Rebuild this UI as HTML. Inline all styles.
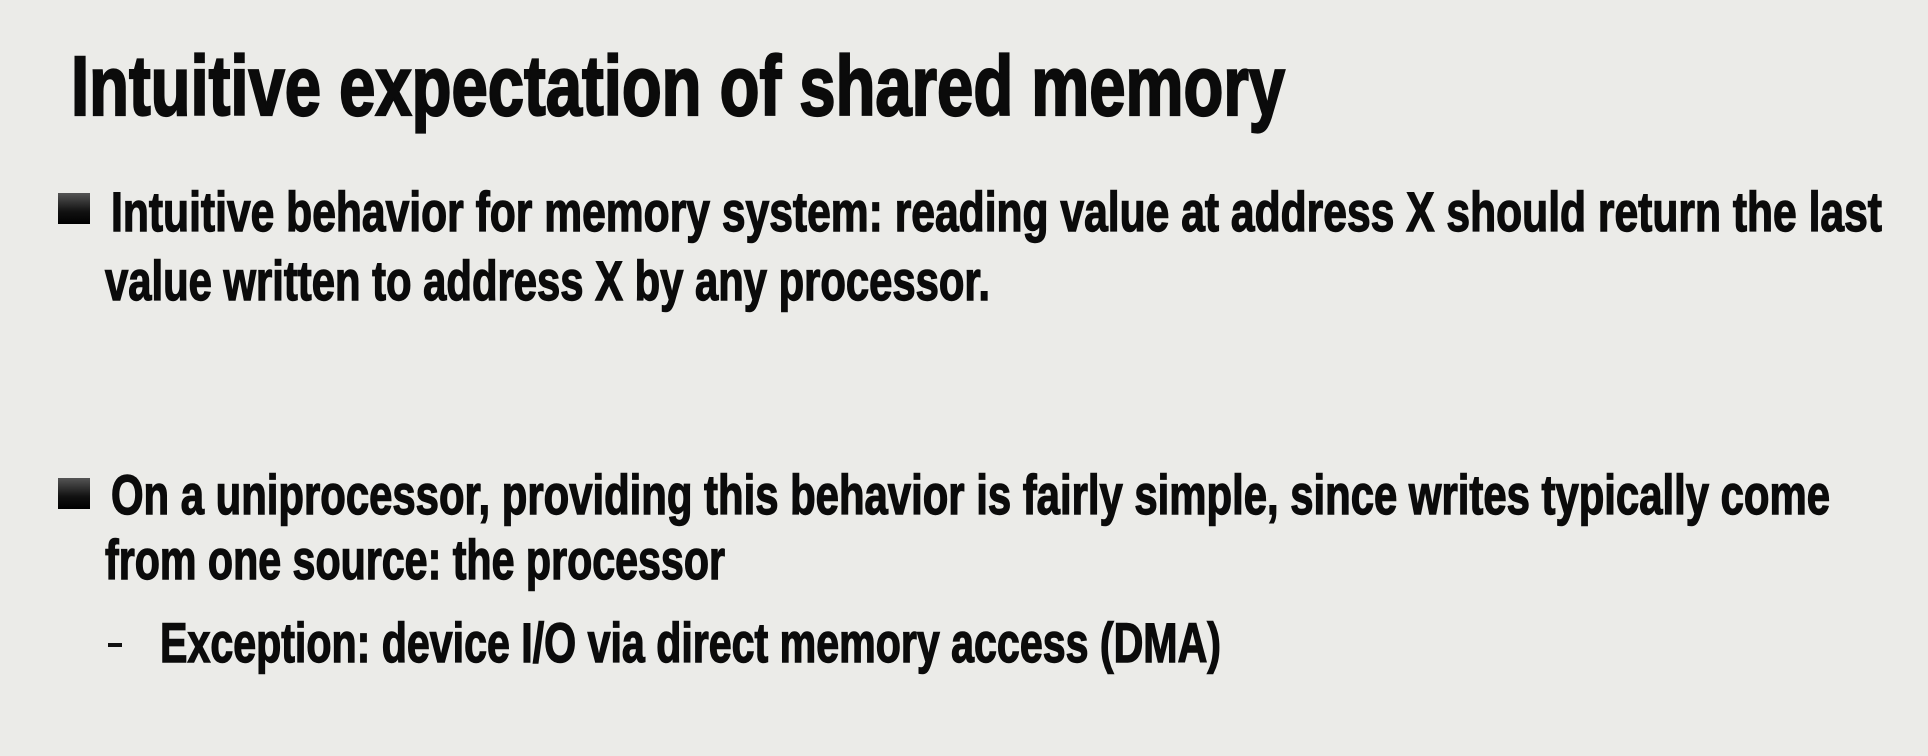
<!DOCTYPE html>
<html><head><meta charset="utf-8"><style>
html,body{margin:0;padding:0}
body{width:1928px;height:756px;background:#ebebe8;position:relative;overflow:hidden;font-family:"Liberation Sans",Arial,sans-serif;font-weight:bold;color:#0b0b0b}
.l{position:absolute;white-space:nowrap;transform-origin:0 0;line-height:1;-webkit-text-stroke:1.4px #0b0b0b}
.t{font-size:84px;-webkit-text-stroke:2.2px #0b0b0b}
.b{font-size:56px}
.sq{position:absolute;width:32px;height:31px;background:linear-gradient(#555,#111 60%,#000);}
</style></head><body>
<div class="l t" data-w="1214" style="left:71px;top:44px;transform:scaleX(0.69)">Intuitive expectation of shared memory</div>
<div class="sq" style="left:58px;top:193px"></div>
<div class="l b" data-w="1771" style="left:111px;top:184px;transform:scaleX(0.7)">Intuitive behavior for memory system: reading value at address X should return the last</div>
<div class="l b" data-w="885" style="left:105px;top:253px;transform:scaleX(0.7)">value written to address X by any processor.</div>
<div class="sq" style="left:58px;top:478px"></div>
<div class="l b" data-w="1719" style="left:111px;top:467px;transform:scaleX(0.7)">On a uniprocessor, providing this behavior is fairly simple, since writes typically come</div>
<div class="l b" data-w="620" style="left:105px;top:532px;transform:scaleX(0.7)">from one source: the processor</div>
<div style="position:absolute;left:108px;top:643px;width:14px;height:4px;background:#111"></div>
<div class="l b" data-w="1061" style="left:160px;top:615px;transform:scaleX(0.7)">Exception: device I/O via direct memory access (DMA)</div>
<script>
document.querySelectorAll('[data-w]').forEach(function(e){
  e.style.transform='none';
  var w=e.getBoundingClientRect().width;
  e.style.transform='scaleX('+(parseFloat(e.dataset.w)/w)+')';
});
</script>
</body></html>
